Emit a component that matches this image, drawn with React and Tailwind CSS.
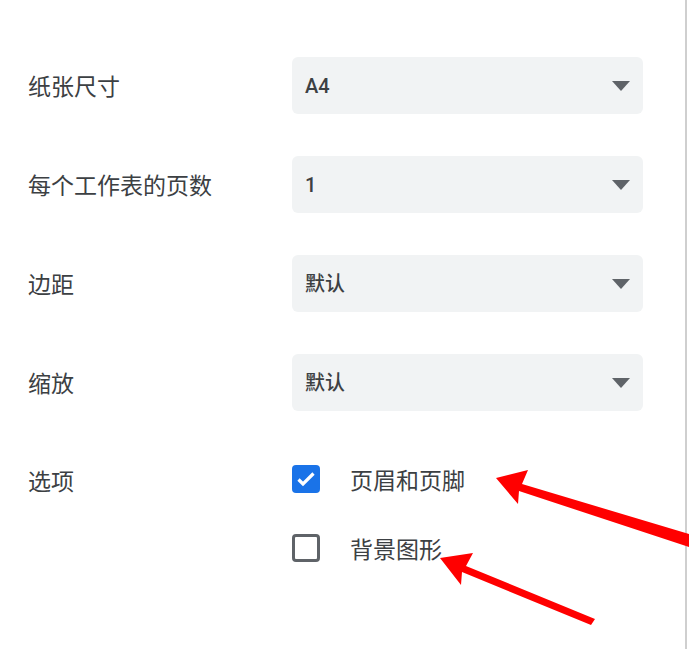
import React from "react";

const rows = [
    { label: "纸张尺寸", value: "A4" },
    { label: "每个工作表的页数", value: "1" },
    { label: "边距", value: "默认" },
    { label: "缩放", value: "默认" },
];

const font = { fontFamily: '"Noto Sans CJK SC", Roboto, sans-serif' };

const Select = ({ value }) => (
    <div className="flex h-[57px] w-[351px] items-center justify-between rounded-[6px] bg-[#f1f3f4] pl-[13px] pr-[13px]">
        <span className="text-[20px] font-medium text-[#3c4043]" style={{ fontFamily: 'Roboto, "Noto Sans CJK SC", sans-serif' }}>
            {value}
        </span>
        <svg width="18" height="10" viewBox="0 0 18 10">
            <path d="M0 0h18L9 10z" fill="#5f6368" />
        </svg>
    </div>
);

const Checkbox = ({ checked }) =>
    checked ? (
        <div className="flex h-[28px] w-[28px] items-center justify-center rounded-[4px] bg-[#1a73e8]">
            <svg width="24" height="24" viewBox="0 0 24 24">
                <path d="M4.5 12.5l4.5 4.5L19.5 6.5" fill="none" stroke="#fff" strokeWidth="3.2" />
            </svg>
        </div>
    ) : (
        <div className="h-[28px] w-[28px] rounded-[4px] border-[3px] border-[#5f6368]" />
    );

export default function App() {
    return (
        <div className="relative h-[649px] w-[689px] bg-white" style={font}>
            <div className="h-[649px] w-[687px] border-r-2 border-[#cfcfcf] pl-[28px] pt-[57px]">
                <div className="flex flex-col gap-[42px]">
                    {rows.map((r) => (
                        <div key={r.label} className="flex items-center">
                            <div className="w-[264px] text-[23px] text-[#3c4043]">{r.label}</div>
                            <Select value={r.value} />
                        </div>
                    ))}
                </div>

                {/* Options */}
                <div className="mt-[54px] flex">
                    <div className="w-[264px] text-[23px] leading-[30px] text-[#3c4043]">选项</div>
                    <div className="flex flex-col gap-[41px]">
                        <label className="flex items-center gap-[30px]">
                            <Checkbox checked />
                            <span className="text-[23px] leading-[28px] text-[#3c4043]">页眉和页脚</span>
                        </label>
                        <label className="flex items-center gap-[30px]">
                            <Checkbox />
                            <span className="text-[23px] leading-[28px] text-[#3c4043]">背景图形</span>
                        </label>
                    </div>
                </div>
            </div>

            {/* red annotation arrows */}
            <svg className="pointer-events-none absolute left-0 top-0" width="689" height="649" viewBox="0 0 689 649">
                <path d="M496 478 L528 470 L522 484 L689 534 L689 547 L519 491 L518 504 Z" fill="#ff0000" />
                <path d="M440 558 L473 553 L466 566 L595 619 L591 625 L462 572 L461 585 Z" fill="#ff0000" />
            </svg>
        </div>
    );
}
